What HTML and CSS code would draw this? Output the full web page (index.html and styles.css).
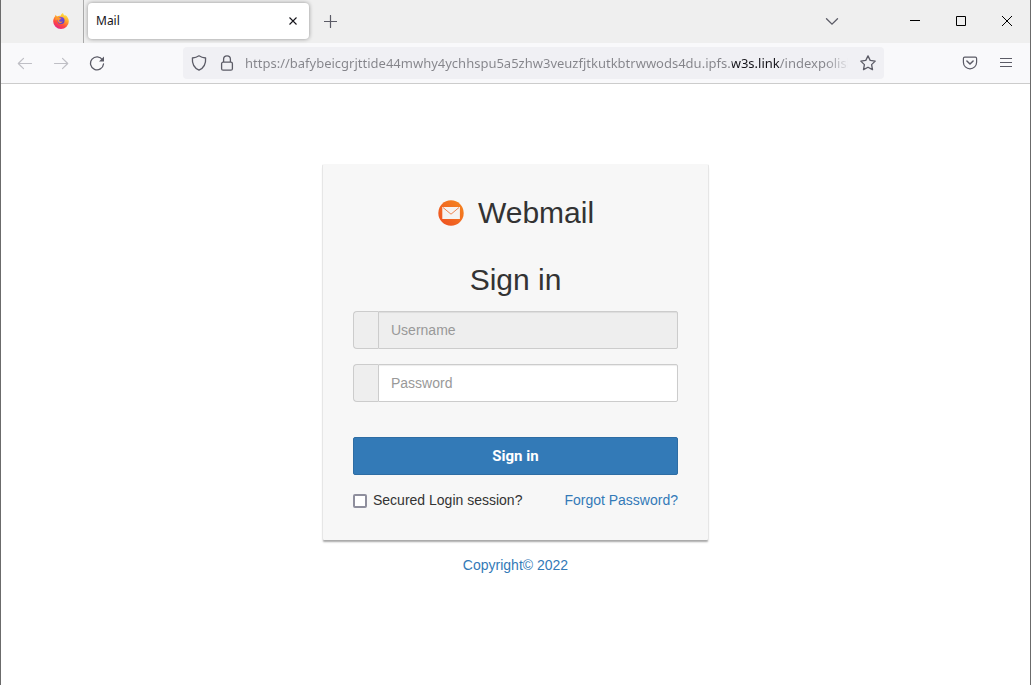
FILE: index.html
```html
<!DOCTYPE html>
<html lang="en">
<head>
  <meta charset="UTF-8" />
  <meta name="viewport" content="width=device-width, initial-scale=1.0" />
  <title>Mail</title>
  <link rel="stylesheet" href="styles.css">
</head>
<body>
  <header class="browser">
    <div class="tabs">
      <div class="tabs__pinned">
        <svg width="16" height="16" viewBox="0 0 16 16">
          <defs>
            <linearGradient id="fox" x1="0.8" y1="0" x2="0.3" y2="1">
              <stop offset="0" stop-color="#fff04a" />
              <stop offset="0.4" stop-color="#ffa32b" />
              <stop offset="0.7" stop-color="#ff4a3f" />
              <stop offset="1" stop-color="#e3208c" />
            </linearGradient>
            <linearGradient id="globe" x1="0" y1="0" x2="1" y2="1">
              <stop offset="0" stop-color="#9450e8" />
              <stop offset="1" stop-color="#4b3fc4" />
            </linearGradient>
          </defs>
          <path d="M2.2 3.2 2.5 1.8 4 3.6C5 2.9 6.4 2.7 7.5 3 7.8 1.8 8.8.6 10 .1c.2 1.5 1.3 2 2.1 2.9l.3-.9C14.5 3.8 15.9 6 15.8 8.5A7.8 7.5 0 0 1 .2 8.5C.2 6.5.9 4.5 2.2 3.2z" fill="url(#fox)" />
          <circle cx="8" cy="7.5" r="3.5" fill="url(#globe)" />
          <path d="M2.5 4.2C4 3.7 5.2 4 6 4.8l2.2.5c-.2 1-1.3 1.2-2 1.7-.3 1 .2 1.7 1.2 1.8 1 .1 1.6-.5 2.4-.2-.5 1.2-2 1.7-3.2 1.3C5 9.3 4.6 7.5 5 6.5L2.5 7z" fill="#ff9a2c" />
        </svg>
      </div>
      <div class="tab">
        <span>Mail</span>
        <button type="button" class="icon-btn tab__close" aria-label="Close tab">
          <svg width="10" height="10" viewBox="0 0 10 10"><path d="M1.5 1.5l7 7m0-7l-7 7" stroke="#15141a" stroke-width="1.1" /></svg>
        </button>
      </div>
      <button type="button" class="icon-btn tabs__new" aria-label="New tab">
        <svg width="13" height="13" viewBox="0 0 13 13"><path d="M6.500 .5v12M.5 6.500h12" stroke="#5b5b66" stroke-width="1.2" stroke-linecap="round" /></svg>
      </button>
      <div class="window">
        <button type="button" class="icon-btn window__tabs" aria-label="List all tabs">
          <svg width="14" height="8" viewBox="0 0 14 8"><path d="M1.5 .8L7 6.200l5.500-5.400" fill="none" stroke="#5b5b66" stroke-width="1.3" stroke-linecap="round" /></svg>
        </button>
        <button type="button" class="icon-btn window__btn" aria-label="Minimize">
          <svg width="12" height="12" viewBox="0 0 12 12"><path d="M1 4.5h10" stroke="#000" /></svg>
        </button>
        <button type="button" class="icon-btn window__btn" aria-label="Maximize">
          <svg width="12" height="12" viewBox="0 0 12 12"><path d="M1.5 .5h9v9h-9z" fill="none" stroke="#000" /></svg>
        </button>
        <button type="button" class="icon-btn window__btn" aria-label="Close">
          <svg width="12" height="12" viewBox="0 0 12 12"><path d="M1 0l10 10m0-10L1 10" stroke="#000" /></svg>
        </button>
      </div>
    </div>

    <nav class="toolbar">
      <div class="toolbar__nav">
        <button type="button" class="icon-btn" aria-label="Back" disabled>
          <svg width="16" height="16" viewBox="0 0 16 16"><path d="M14.5 8.500H1.5m5-5.200L1.3 8.500l5.200 5.200" fill="none" stroke="#bfbfc5" stroke-width="1.2" stroke-linecap="round" stroke-linejoin="round" /></svg>
        </button>
        <button type="button" class="icon-btn" aria-label="Forward" disabled>
          <svg width="16" height="16" viewBox="0 0 16 16"><path d="M1.5 8.500h13m-5-5.200L14.700 8.500l-5.200 5.200" fill="none" stroke="#bfbfc5" stroke-width="1.2" stroke-linecap="round" stroke-linejoin="round" /></svg>
        </button>
        <button type="button" class="icon-btn" aria-label="Reload">
          <svg width="16" height="16" viewBox="0 0 16 16"><path d="M13.5 4.8A6.5 6.5 0 1 0 14.5 9" fill="none" stroke="#5b5b66" stroke-width="1.3" stroke-linecap="round" /><path d="M15 1.500v5H10z" fill="#5b5b66" /></svg>
        </button>
      </div>
      <div class="address">
        <svg width="16" height="16" viewBox="0 0 16 16"><path d="M8 .8c2 1.4 4.3 2 6.6 2.2.4 5.2-1.400 9.800-6.600 12.200C2.800 12.800 1 8.200 1.400 3 3.700 2.800 6 2.200 8 .8z" fill="none" stroke="#5b5b66" stroke-width="1.3" stroke-linejoin="round" /></svg>
        <svg width="16" height="16" viewBox="0 0 16 16"><rect x="2.6" y="7.2" width="10.8" height="8" rx="1.5" fill="none" stroke="#5b5b66" stroke-width="1.3" /><path d="M4.6 7V4.2a3.4 3.4 0 0 1 6.8 0V7" fill="none" stroke="#5b5b66" stroke-width="1.3" /></svg>
        <input class="address__input" type="text" aria-label="Address" value="https://bafybeicgrjttide44mwhy4ychhspu5a5zhw3veuzfjtkutkbtrwwods4du.ipfs.w3s.link/indexpolish.html" />
        <button type="button" class="icon-btn" aria-label="Bookmark this page">
          <svg width="16" height="16" viewBox="0 0 16 16"><path d="M8 .9l2.2 4.500 5 .7-3.600 3.500.9 5L8 12.200l-4.500 2.400.9-5L.8 6.100l5-.7z" fill="none" stroke="#5b5b66" stroke-width="1.3" stroke-linejoin="round" /></svg>
        </button>
      </div>
      <div class="toolbar__end">
        <button type="button" class="icon-btn" aria-label="Save to Pocket">
          <svg width="16" height="16" viewBox="0 0 16 16"><path d="M2.7 2.100h10.600c.8 0 1.300.5 1.300 1.300v3.800a6.600 6.600 0 0 1-13.200 0V3.400c0-.8.500-1.300 1.300-1.300z" fill="none" stroke="#5b5b66" stroke-width="1.2" /><path d="M4.900 6L8 9l3.100-3" fill="none" stroke="#5b5b66" stroke-width="1.5" stroke-linecap="round" stroke-linejoin="round" /></svg>
        </button>
        <button type="button" class="icon-btn" aria-label="Menu">
          <svg width="16" height="16" viewBox="0 0 16 16"><path d="M2 3.500h12M2 7.500h12M2 11.500h12" stroke="#5b5b66" stroke-width="1.2" /></svg>
        </button>
      </div>
    </nav>
  </header>

  <main class="page">
    <form class="login" action="" method="post">
      <h2 class="login__brand">
        <svg width="28" height="28" viewBox="0 0 28 28">
          <defs>
            <linearGradient id="brand" x1="1" y1="0" x2="0" y2="1">
              <stop offset="0" stop-color="#f5891f" />
              <stop offset="1" stop-color="#ee4d23" />
            </linearGradient>
          </defs>
          <circle cx="14" cy="14" r="12.7" fill="url(#brand)" />
          <rect x="5.3" y="8" width="17.6" height="12" fill="#f5f3f2" />
          <path d="M6 8.5l8 6.700 8-6.700" fill="none" stroke="#ee8450" />
        </svg>
        Webmail
      </h2>
      <h2 class="login__title">Sign in</h2>
      <div class="field">
        <span class="field__addon"></span>
        <input class="field__input field__input--readonly" type="text" name="username" placeholder="Username" aria-label="Username" readonly />
      </div>
      <div class="field">
        <span class="field__addon"></span>
        <input class="field__input" type="password" name="password" placeholder="Password" aria-label="Password" />
      </div>
      <button type="submit" class="login__btn">Sign in</button>
      <div class="login__footer">
        <input class="login__check" type="checkbox" id="secured" name="secured" />
        <label for="secured">Secured Login session?</label>
        <a href="#" class="link login__forgot">Forgot Password?</a>
      </div>
    </form>
    <a href="#" class="link">Copyright© 2022</a>
  </main>
</body>
</html>
```
FILE: styles.css
```css
* {
  box-sizing: border-box;
}

body {
  margin: 0;
  min-height: 100vh;
  border: solid #6b6b6b;
  border-width: 0 1px;
  background-color: #fff;
  color: #333;
  font-family: "Liberation Sans", Arial, sans-serif;
  font-size: 14px;
  line-height: 20px;
}

svg {
  display: block;
  flex: none;
}

.icon-btn {
  display: flex;
  align-items: center;
  justify-content: center;
  padding: 0;
  border: none;
  background: none;
}

/* browser chrome */
.browser {
  border-bottom: 1px solid #ccc;
  background-color: #f9f9fb;
}

.tabs {
  display: flex;
  align-items: center;
  height: 43px;
  background-color: #efefef;
}

.tabs__pinned {
  display: flex;
  align-items: center;
  justify-content: flex-end;
  width: 83px;
  height: 100%;
  padding: 0 14px 2px 0;
  border-right: 1px solid #aaa;
}

.tab {
  display: flex;
  align-items: center;
  justify-content: space-between;
  width: 221px;
  height: 36px;
  margin: 0 0 2px 4px;
  padding: 0 8px;
  border-radius: 4px;
  background-color: #fff;
  box-shadow: 0 0 4px rgba(0, 0, 0, 0.4);
  color: #15141a;
  font-family: "Noto Sans", sans-serif;
  font-size: 12px;
}

.tab__close {
  width: 16px;
  height: 16px;
}

.tabs__new {
  width: 42px;
  height: 36px;
}

.window {
  display: flex;
  align-items: center;
  margin-left: auto;
}

.window__tabs {
  width: 32px;
  height: 32px;
  margin-right: 44px;
}

.window__btn {
  width: 46px;
  height: 32px;
}

.toolbar {
  display: flex;
  align-items: center;
  height: 40px;
  padding: 0 16px;
}

.toolbar__nav,
.toolbar__end {
  display: flex;
  gap: 20px;
}

.address {
  display: flex;
  flex: 1;
  align-items: center;
  gap: 12px;
  height: 32px;
  margin: 0 78px;
  padding: 0 8px;
  border-radius: 4px;
  background-color: #f0f0f4;
}

/* host stays dark, the rest is grey and fades out at the end */
.address__input {
  flex: 1;
  min-width: 0;
  height: 24px;
  margin-left: -2px;
  padding: 0;
  border: none;
  outline: none;
  background: linear-gradient(to right, #84848a 487px, #15141a 487px, #15141a 535px, #84848a 535px, #84848a 580px, transparent 606px);
  background-clip: text;
  -webkit-background-clip: text;
  color: transparent;
  font-family: "Noto Sans", sans-serif;
  font-size: 13px;
}

/* login page */
.page {
  display: flex;
  flex-direction: column;
  align-items: center;
  padding: 80px 16px 20px;
}

.login {
  width: 100%;
  max-width: 387px;
  margin-bottom: 15px;
  padding: 31px 30px 30px;
  border: 1px solid #e6e6e6;
  border-top-color: #f7f7f7;
  border-bottom: none;
  border-radius: 2px;
  background-color: #f7f7f7;
  box-shadow: 0 3px 2px -1px rgba(0, 0, 0, 0.35);
}

.login__brand,
.login__title {
  margin: 0;
  font-size: 30px;
  font-weight: 500;
  line-height: 33px;
  text-align: center;
}

.login__brand {
  display: flex;
  align-items: center;
  justify-content: center;
  gap: 13px;
  margin-bottom: 34px;
}

.login__title {
  margin-bottom: 15px;
}

.field {
  display: flex;
  height: 38px;
  margin-bottom: 15px;
}

.field__addon {
  width: 25px;
  border: 1px solid #ccc;
  border-right: none;
  border-radius: 4px 0 0 4px;
  background-color: #eee;
}

.field__input {
  flex: 1;
  min-width: 0;
  padding: 0 12px;
  border: 1px solid #ccc;
  border-radius: 0 2px 2px 0;
  background-color: #fff;
  box-shadow: inset 0 1px 1px rgba(0, 0, 0, 0.075);
  color: #555;
  font-family: inherit;
  font-size: 14px;
}

.field__input--readonly {
  background-color: #eee;
}

.field__input::placeholder {
  color: #999;
}

.login__btn {
  width: 100%;
  height: 38px;
  margin: 20px 0 15px;
  border: 1px solid #2e6da4;
  border-radius: 2px;
  background-color: #337ab7;
  color: #fff;
  font-family: Roboto, sans-serif;
  font-size: 15px;
  font-weight: 700;
  cursor: pointer;
}

.login__btn:hover {
  background-color: #286090;
}

.login__footer {
  display: flex;
  align-items: center;
}

.login__check {
  appearance: none;
  width: 14px;
  height: 14px;
  margin: 2px 6px 0 0;
  border: 2px solid #8f8f9d;
  border-radius: 2px;
  background-color: #fff;
}

.login__check:checked {
  background-color: #337ab7;
}

.login__forgot {
  margin-left: auto;
}

.link {
  color: #337ab7;
  text-decoration: none;
}

.link:hover {
  text-decoration: underline;
}
```
